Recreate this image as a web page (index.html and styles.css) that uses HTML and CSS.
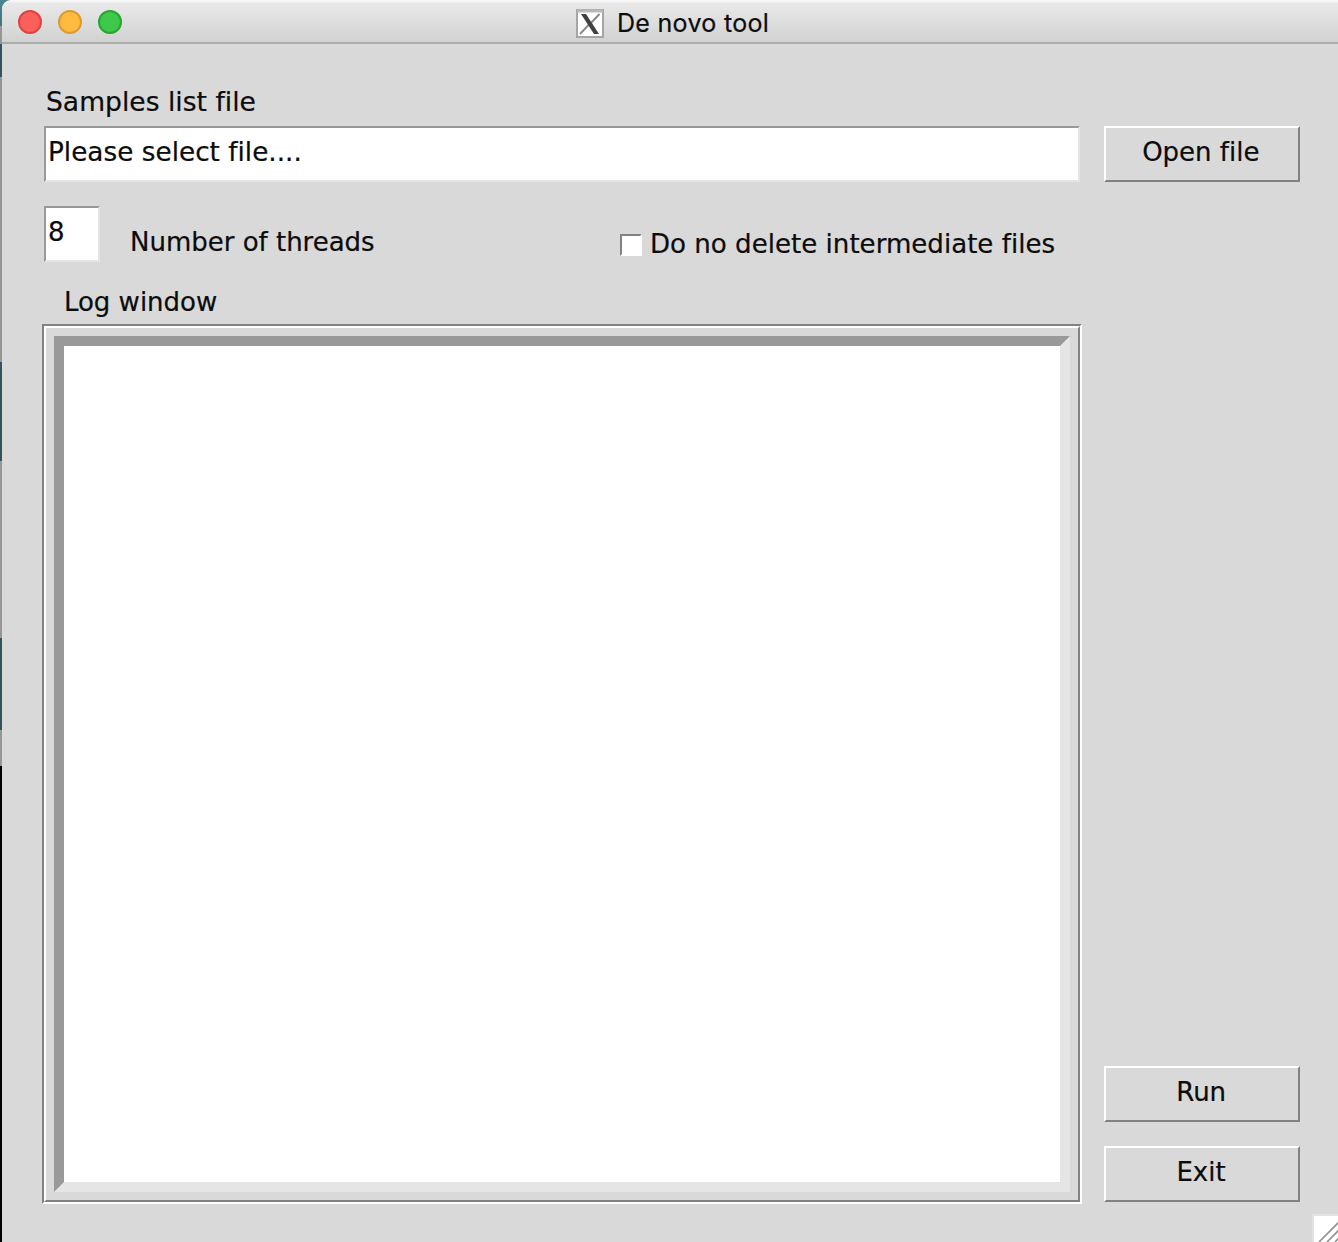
FILE: index.html
```html
<!DOCTYPE html>
<html lang="en">
<head>
<meta charset="utf-8">
<title>De novo tool</title>
<link rel="stylesheet" href="styles.css">
</head>
<body>
<div class="desktop">
  <main class="window">
    <header class="titlebar">
      <div class="lights"><i class="light close"></i><i class="light minimize"></i><i class="light expand"></i></div>
      <div class="title">
        <svg class="app-icon" width="28" height="29" viewBox="0 0 28 29">
          <rect x="1" y="1" width="26" height="27" fill="#fff" stroke="#a5a5a5" stroke-width="2"/>
          <path d="M1 2H27" stroke="#b8b8b8" stroke-width="3"/>
          <path d="M23.5 5 14.5 14.5M12.5 16 4 25" stroke="#888" stroke-width="1.9"/>
          <path d="M5 5H10L23 25H18Z" fill="#404040"/>
        </svg>
        <span class="title-text">De novo tool</span>
      </div>
    </header>
    <section class="content">
      <div class="left">
        <label class="label samples"><span class="text t-samples">Samples list file</span></label>
        <div class="entry file"><span class="text t-file">Please select file....</span></div>
        <div class="options">
          <div class="entry threads"><span class="text">8</span></div>
          <label class="label thread-label"><span class="text">Number of threads</span></label>
          <label class="label keep"><i class="check"></i><span class="text t-keep">Do no delete intermediate files</span></label>
        </div>
        <div class="label log-label"><span class="text">Log window</span></div>
        <div class="log-frame"><div class="log-inner"><div class="log"></div></div></div>
      </div>
      <div class="right">
        <button class="btn open"><span class="text">Open file</span></button>
        <button class="btn run"><span class="text">Run</span></button>
        <button class="btn exit"><span class="text">Exit</span></button>
      </div>
    </section>
    <svg class="grip" width="26" height="28" viewBox="0 0 26 28">
      <rect width="26" height="28" fill="#e2e2e2"/>
      <rect x="2" y="2" width="24" height="26" fill="#fff"/>
      <path d="M7 28 27 8M15 28 27 16M23 28 27 24" stroke="#929292" stroke-width="1.7"/>
    </svg>
  </main>
</div>
</body>
</html>
```
FILE: styles.css
```css
* { box-sizing: border-box; }
body { margin: 0; overflow: hidden; }
.desktop {
  width: 1338px;
  height: 1242px;
  padding-left: 2px;
  background: linear-gradient(#4b858f 0, #3f7580 26px, #969696 26px, #969696 28px, #969696 44px, #2e5560 44px, #2e5560 77px, #959595 77px, #959595 362px, #31545d 362px, #31545d 461px, #969696 461px, #969696 638px, #31545d 638px, #31545d 730px, #969696 730px, #969696 766px, #000 766px);
}
.window {
  position: relative;
  height: 1242px;
  display: flex;
  flex-direction: column;
  background: #d9d9d9;
  border-top-left-radius: 9px;
  font: 27px/32px "DejaVu Sans Condensed", "DejaVu Sans", sans-serif;
  font-stretch: condensed;
  color: #0c0c0c;
}
.titlebar {
  height: 44px;
  flex: none;
  display: flex;
  align-items: flex-start;
  background: linear-gradient(#f6f6f6 0, #f4f4f4 2px, #e9e9e9 3px, #d2d2d2 42px);
  border-bottom: 2px solid #acacac;
  border-top-left-radius: 9px;
}
.lights { display: flex; gap: 16px; padding: 10px 0 0 16px; width: 574px; }
.light { width: 24px; height: 24px; border-radius: 50%; border: 2px solid; }
.close { background: #fc605c; border-color: #e2423f; }
.minimize { background: #fdbc40; border-color: #dd9a2f; }
.expand { background: #3ec94a; border-color: #27a52f; }
.title { display: flex; gap: 13px; padding-top: 9px; }
.title-text { font: 25px/29px Inter, sans-serif; letter-spacing: 0.3px; white-space: nowrap; -webkit-text-stroke: 0.2px; }
.content { flex: 1; display: flex; gap: 22px; padding-left: 40px; }
.left { width: 1040px; padding-top: 42px; }
.right { width: 196px; display: flex; flex-direction: column; padding: 82px 0 40px; }
.text {
  display: inline-block;
  white-space: nowrap;
  font-variant-ligatures: none;
  transform: scaleX(1.07);
  transform-origin: left center;
  -webkit-text-stroke: 0.2px;
}
.t-samples { transform: scaleX(1.094); }
.t-file { transform: scaleX(1.083); }
.t-keep { transform: scaleX(1.074); }
.label { display: block; }
.samples { height: 40px; padding-left: 4px; }
.entry {
  background: #fff;
  border: 2px solid;
  border-color: #999 #e5e5e5 #e5e5e5 #999;
  height: 56px;
  padding: 8px 0 0 2px;
}
.file { width: 1036px; margin-left: 2px; }
.options { display: flex; margin: 24px 0 0 2px; height: 80px; }
.threads { width: 56px; }
.thread-label { margin-left: 30px; padding-top: 20px; width: 490px; }
.keep { display: flex; gap: 8px; padding-top: 22px; }
.check { width: 22px; height: 22px; margin-top: 6px; background: #fff; border: 2px solid; border-color: #828282 #fff #fff #828282; }
.log-label { height: 38px; padding-left: 22px; }
.log-frame { height: 880px; border: 2px solid; border-color: #828282 #fff #fff #828282; }
.log-inner { height: 876px; border: 2px solid; border-color: #fff #828282 #828282 #fff; padding: 8px; }
.log { height: 856px; background: #fff; border: 10px solid; border-color: #999 #e5e5e5 #e5e5e5 #999; }
.btn {
  height: 56px;
  flex: none;
  border: 2px solid;
  border-color: #fff #828282 #828282 #fff;
  border-radius: 0;
  background: #d9d9d9;
  color: #0c0c0c;
  font: inherit;
  padding: 0 2px 4px 0;
}
.btn .text { transform-origin: center; }
.run { margin-top: auto; }
.exit { margin-top: 24px; }
.grip { position: absolute; right: 0; bottom: 0; }
```
